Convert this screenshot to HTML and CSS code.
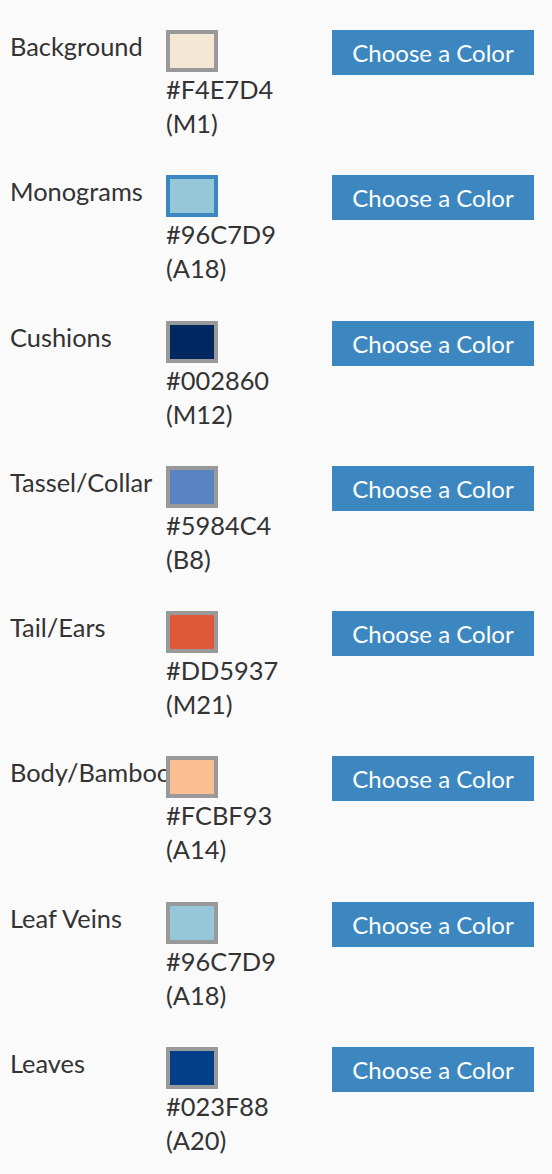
FILE: index.html
```html
<!DOCTYPE html>
<html>
<head>
<meta charset="utf-8">
<link rel="stylesheet" href="styles.css">
</head>
<body>
<div class="list">
  <div class="row">
    <div class="label">Background</div>
    <div class="info"><div class="swatch" style="background:#F4E7D4"></div><div class="code">#F4E7D4<br>(M1)</div></div>
    <button class="btn">Choose a Color</button>
  </div>
  <div class="row">
    <div class="label">Monograms</div>
    <div class="info"><div class="swatch active" style="background:#96C7D9"></div><div class="code">#96C7D9<br>(A18)</div></div>
    <button class="btn">Choose a Color</button>
  </div>
  <div class="row">
    <div class="label">Cushions</div>
    <div class="info"><div class="swatch" style="background:#002860"></div><div class="code">#002860<br>(M12)</div></div>
    <button class="btn">Choose a Color</button>
  </div>
  <div class="row">
    <div class="label">Tassel/Collar</div>
    <div class="info"><div class="swatch" style="background:#5984C4"></div><div class="code">#5984C4<br>(B8)</div></div>
    <button class="btn">Choose a Color</button>
  </div>
  <div class="row">
    <div class="label">Tail/Ears</div>
    <div class="info"><div class="swatch" style="background:#DD5937"></div><div class="code">#DD5937<br>(M21)</div></div>
    <button class="btn">Choose a Color</button>
  </div>
  <div class="row">
    <div class="label">Body/Bamboo</div>
    <div class="info"><div class="swatch" style="background:#FCBF93"></div><div class="code">#FCBF93<br>(A14)</div></div>
    <button class="btn">Choose a Color</button>
  </div>
  <div class="row">
    <div class="label">Leaf Veins</div>
    <div class="info"><div class="swatch" style="background:#96C7D9"></div><div class="code">#96C7D9<br>(A18)</div></div>
    <button class="btn">Choose a Color</button>
  </div>
  <div class="row">
    <div class="label">Leaves</div>
    <div class="info"><div class="swatch" style="background:#023F88"></div><div class="code">#023F88<br>(A20)</div></div>
    <button class="btn">Choose a Color</button>
  </div>
</div>
</body>
</html>
```

FILE: styles.css
```css
html, body {
  margin: 0;
  padding: 0;
  background: #fafafa;
}
body {
  font-family: Lato, "Liberation Sans", sans-serif;
  color: #333;
}
.list {
  display: flex;
  flex-direction: column;
  gap: 35.3px;
  padding: 30px 0 0 10px;
}
.row {
  display: flex;
  align-items: flex-start;
}
.label {
  width: 156px;
  flex: none;
  font-size: 25.4px;
  line-height: 34px;
  white-space: nowrap;
  margin-top: -1px;
}
.info {
  width: 166px;
  flex: none;
}
.swatch {
  width: 44px;
  height: 34px;
  border: 4px solid #999;
}
.swatch.active {
  border-color: #3b87c0;
}
.code {
  font-size: 25.4px;
  line-height: 34px;
}
.btn {
  width: 202px;
  height: 45px;
  border: none;
  padding: 0;
  background: #3c87c0;
  color: #fff;
  font-family: Lato, "Liberation Sans", sans-serif;
  font-size: 24px;
  display: flex;
  align-items: center;
  justify-content: center;
}
```
